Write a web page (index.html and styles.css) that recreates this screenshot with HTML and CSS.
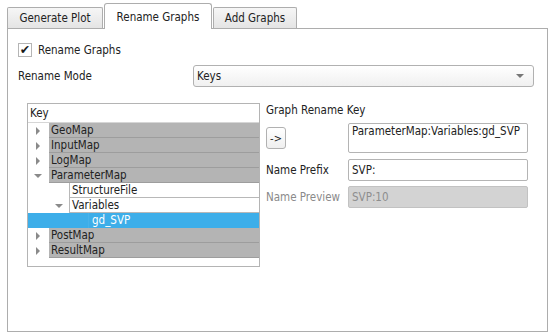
FILE: index.html
```html
<!DOCTYPE html>
<html lang="en">
<head>
    <meta charset="UTF-8">
    <title>Rename Graphs</title>
    <link rel="stylesheet" href="styles.css">
</head>
<body>
    <div class="tabs">
        <div class="tab">Generate Plot</div>
        <div class="tab active">Rename Graphs</div>
        <div class="tab">Add Graphs</div>
    </div>
    <div class="panel">
        <label class="check_row">
            <span class="check">&#10004;</span>
            Rename Graphs
        </label>
        <div class="mode_row">
            <span class="mode_label">Rename Mode</span>
            <div class="combo">Keys<span class="combo_arrow"></span></div>
        </div>

        <div class="main">
            <div class="tree">
                <div class="tree_head">Key</div>
                <div class="row"><span class="ind l1"><i class="arr right"></i></span><span class="cell gray">GeoMap</span></div>
                <div class="row"><span class="ind l1"><i class="arr right"></i></span><span class="cell gray">InputMap</span></div>
                <div class="row"><span class="ind l1"><i class="arr right"></i></span><span class="cell gray">LogMap</span></div>
                <div class="row"><span class="ind l1"><i class="arr down"></i></span><span class="cell gray">ParameterMap</span></div>
                <div class="row"><span class="ind l2"></span><span class="cell white">StructureFile</span></div>
                <div class="row"><span class="ind l2"><i class="arr down"></i></span><span class="cell white">Variables</span></div>
                <div class="row selected"><span class="ind l3"></span><span class="cell sel">gd_SVP</span></div>
                <div class="row"><span class="ind l1"><i class="arr right"></i></span><span class="cell gray">PostMap</span></div>
                <div class="row"><span class="ind l1"><i class="arr right"></i></span><span class="cell gray">ResultMap</span></div>
            </div>

            <div class="side">
                <div class="side_title">Graph Rename Key</div>
                <div class="key_row">
                    <button class="btn">-&gt;</button>
                    <div class="field key_field">ParameterMap:Variables:gd_SVP</div>
                </div>
                <div class="form_row">
                    <span class="form_label">Name Prefix</span>
                    <div class="field">SVP:</div>
                </div>
                <div class="form_row">
                    <span class="form_label disabled">Name Preview</span>
                    <div class="field off">SVP:10</div>
                </div>
            </div>
        </div>
    </div>
</body>
</html>
```

FILE: styles.css
```css
body{
    margin: 0;
    background-color: #fff;
    font-family: "DejaVu Sans Condensed", "DejaVu Sans", sans-serif;
    font-size: 11.5px;
    color: #222;
}
.tabs{
    display: flex;
    align-items: flex-end;
    height: 29px;
    padding-left: 7px;
    position: relative;
    z-index: 1;
}
.tab{
    box-sizing: border-box;
    height: 21px;
    line-height: 20px;
    text-align: center;
    white-space: nowrap;
    background: linear-gradient(#f6f6f6, #e4e4e4);
    border: 1px solid #adadad;
    border-bottom: none;
    border-radius: 2px 2px 0 0;
    margin-right: 1px;
    margin-bottom: 1px;
}
.tab:nth-child(1){ width: 96px; }
.tab:nth-child(3){ width: 84px; }
.tab.active{
    width: 108px;
    height: 26px;
    line-height: 26px;
    background: #fff;
    margin-bottom: 0;
    border-radius: 3px 3px 0 0;
}
.panel{
    width: 539px;
    height: 302px;
    margin-left: 7px;
    margin-top: -1px;
    border: 1px solid #adadad;
    background: #fff;
}
.check_row{
    display: flex;
    align-items: center;
    gap: 6px;
    margin: 13px 0 0 10px;
    height: 15px;
}
.check{
    width: 12px;
    height: 12px;
    border: 1px solid #b5b5b5;
    background: #fff;
    font-family: "DejaVu Sans", sans-serif;
    font-size: 12.5px;
    line-height: 12px;
    text-align: center;
    overflow: hidden;
    color: #1a1a1a;
}
.mode_row{
    display: flex;
    align-items: center;
    margin: 8px 0 0 10px;
}
.mode_label{
    width: 175px;
}
.combo{
    position: relative;
    width: 336px;
    height: 20px;
    line-height: 20px;
    padding-left: 3px;
    border: 1px solid #b1b1b1;
    border-radius: 3px;
    background: linear-gradient(#fff, #f0f0f0);
}
.combo_arrow{
    position: absolute;
    right: 9px;
    top: 8px;
    border-left: 4px solid transparent;
    border-right: 4px solid transparent;
    border-top: 4px solid #777;
}
.main{
    display: flex;
    margin: 16px 0 0 19px;
}
.tree{
    width: 231px;
    height: 162px;
    border: 1px solid #b4b4b4;
}
.tree_head{
    height: 18px;
    line-height: 18px;
    padding-left: 2px;
    border-bottom: 1px solid #d6d6d6;
}
.row{
    display: flex;
    height: 15px;
    line-height: 15px;
}
.ind{
    flex: none;
    display: flex;
    align-items: center;
}
.ind.l1{ width: 21px; padding-left: 8px; box-sizing: border-box; }
.ind.l2{ width: 41px; padding-left: 29px; box-sizing: border-box; }
.ind.l3{ width: 60px; }
.cell{
    flex: 1;
    padding-left: 2px;
    box-sizing: border-box;
}
.cell.gray{
    background: #b4b4b4;
    border-bottom: 1px solid #9d9d9d;
}
.cell.white{
    background: #fff;
    border-left: 1px solid #b8b8b8;
    border-bottom: 1px solid #b8b8b8;
}
.row.selected{
    background: #3daee9;
    color: #fff;
}
.cell.sel{
    border-left: 1px solid #48b2ea;
    padding-left: 3px;
}
.arr{
    display: block;
}
.arr.right{
    border-top: 4px solid transparent;
    border-bottom: 4px solid transparent;
    border-left: 4px solid #8a8a8a;
}
.arr.down{
    border-left: 4px solid transparent;
    border-right: 4px solid transparent;
    border-top: 4px solid #8a8a8a;
    margin-left: -2px;
}
.side{
    margin-left: 6px;
    width: 263px;
}
.side_title{
    height: 15px;
}
.key_row{
    display: flex;
    align-items: flex-start;
    margin-top: 5px;
}
.btn{
    margin: 4px 0 0 0;
    width: 20px;
    height: 22px;
    padding: 0;
    font-family: inherit;
    font-size: 11px;
    color: #222;
    border: 1px solid #b1b1b1;
    border-radius: 3px;
    background: linear-gradient(#fff, #efefef);
}
.field{
    width: 175px;
    height: 20px;
    line-height: 20px;
    padding-left: 3px;
    border: 1px solid #b4b4b4;
    border-radius: 2px;
    background: #fff;
}
.key_field{
    height: 28px;
    line-height: 14px;
    margin-left: 62px;
}
.form_row{
    display: flex;
    align-items: center;
    margin-top: 6px;
}
.form_row + .form_row{
    margin-top: 5px;
}
.form_label{
    width: 82px;
}
.form_label.disabled{
    color: #8a8a8a;
}
.field.off{
    background: #d3d3d3;
    color: #8e8e8e;
    border-color: #c2c2c2;
}
```
